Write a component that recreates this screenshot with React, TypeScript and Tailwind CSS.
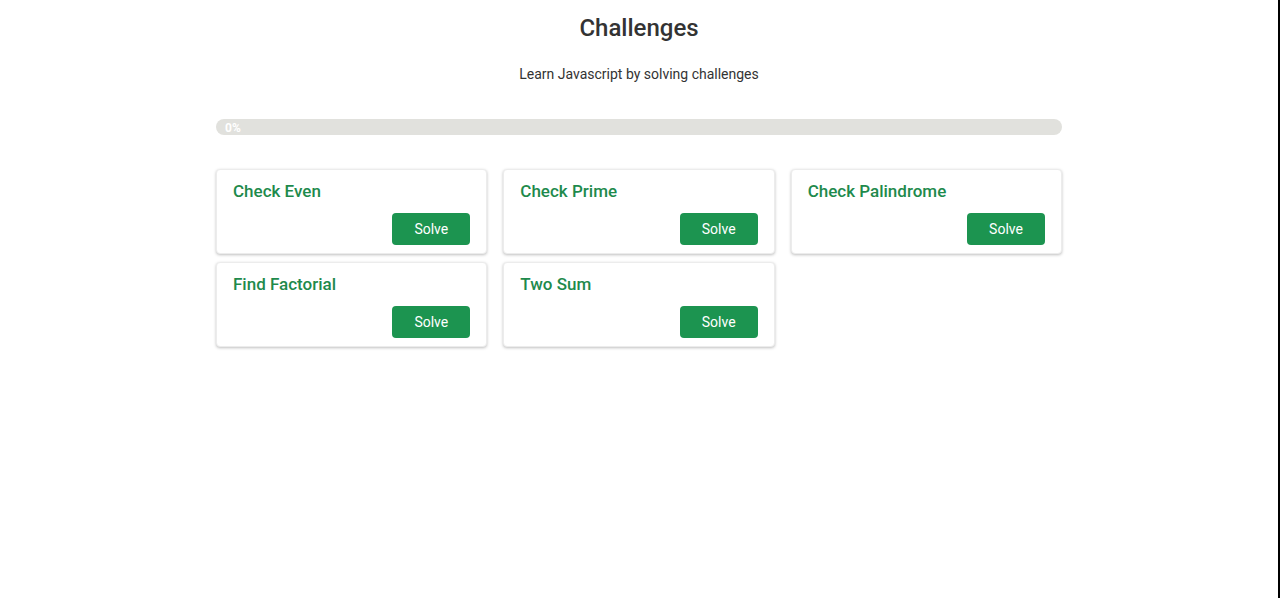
const challenges = ["Check Even", "Check Prime", "Check Palindrome", "Find Factorial", "Two Sum"];

export default function App() {
  return (
    <div className="flex h-[598px] w-full bg-white font-['Roboto',sans-serif]">
      <div className="flex-1">
        <div className="mx-auto w-[846px] pt-[13px]">
          <h1 className="text-center text-[24px] font-medium leading-[30px] text-[#333]">Challenges</h1>
          <p className="mt-[21px] text-center text-[14px] leading-[20px] text-[#333]">Learn Javascript by solving challenges</p>
          <div className="mt-[35px] flex h-[16px] items-center rounded-full bg-[#e1e1dd] px-[9px] pt-px">
            <span className="text-[12px] font-bold text-white">0%</span>
          </div>
          <div className="mt-[34px] grid grid-cols-3 gap-x-[16px] gap-y-[8px]">
            {challenges.map((c) => (
              <div key={c} className="flex h-[85px] flex-col rounded-[4px] border border-[#ececec] bg-white px-[16px] pt-[9px] shadow-[0_1px_3px_rgba(0,0,0,0.25)]">
                <h2 className="text-[17px] font-medium leading-[24px] text-[#1e8a4c]">{c}</h2>
                <div className="mt-[10px] flex justify-end">
                  <button className="h-[32px] w-[78px] rounded-[4px] bg-[#1c9450] text-[14px] text-white">Solve</button>
                </div>
              </div>
            ))}
          </div>
        </div>
      </div>
      <div className="w-[2px] bg-black" />
    </div>
  );
}
